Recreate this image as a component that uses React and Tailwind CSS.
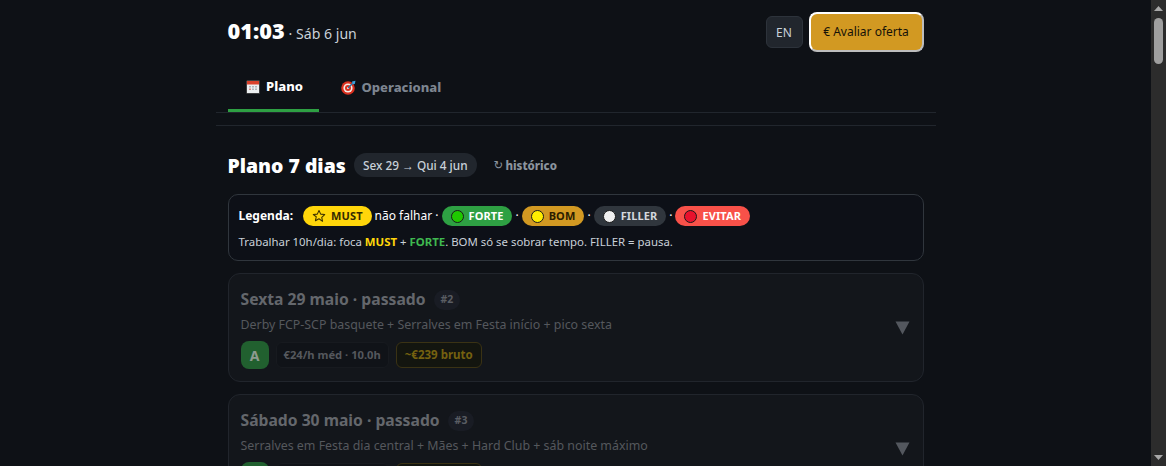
import React from "react";

function Calendar() {
  return (
    <svg width="14" height="14" viewBox="0 0 14 14" className="shrink-0">
      <rect x="0.5" y="0.5" width="13" height="13" fill="#eceff1" stroke="#111" strokeWidth="0.6" />
      <rect x="1" y="1" width="12" height="3.5" fill="#d9412c" />
      <g fill="#b0b6bb">
        <rect x="3" y="6" width="2" height="1.5" /><rect x="6" y="6" width="2" height="1.5" /><rect x="9" y="6" width="2" height="1.5" />
        <rect x="6" y="8.5" width="2" height="1.5" /><rect x="9" y="8.5" width="2" height="1.5" />
      </g>
      <rect x="3" y="8.5" width="2" height="1.5" fill="#d98a80" />
    </svg>
  );
}

function Target() {
  return (
    <svg width="15" height="15" viewBox="0 0 15 15" className="shrink-0">
      <circle cx="7" cy="8" r="6.8" fill="#d9301f" />
      <circle cx="7" cy="8" r="4.6" fill="#f4ece6" />
      <circle cx="7" cy="8" r="3" fill="#d9301f" />
      <circle cx="7" cy="8" r="1.1" fill="#f4ece6" />
      <path d="M7 8 L12 3" stroke="#2a6f9e" strokeWidth="1.2" />
      <path d="M11 1.5 L14.5 0.8 L13.8 4 L11.6 4.2 Z" fill="#3aa0dc" />
    </svg>
  );
}

function Dot({ color }) {
  return <span className="w-[13px] h-[13px] rounded-full border border-[#1a1a1a] shrink-0" style={{ backgroundColor: color }} />;
}

function Star() {
  return (
    <svg width="14" height="14" viewBox="0 0 24 24" className="shrink-0">
      <path d="M12 2.5l2.9 6.3 6.9.8-5.1 4.7 1.4 6.8L12 16.8 5.9 20.1l1.4-6.8L2.2 9.6l6.9-.8z" fill="none" stroke="#3a3000" strokeWidth="1.8" strokeLinejoin="round" />
    </svg>
  );
}

function Badge({ bg, fg, icon, children }) {
  return (
    <span className={`inline-flex items-center gap-[5px] h-5 px-[9px] rounded-full text-[11px] font-bold tracking-[0.1px] ${bg} ${fg}`}>
      {icon}
      {children}
    </span>
  );
}

function Caret() {
  return (
    <svg width="15" height="14" viewBox="0 0 15 14" className="shrink-0 -mt-[2px]">
      <path d="M0.5 0.5H14.5L7.5 13.5Z" fill="#53575e" />
    </svg>
  );
}

function DayCard({ title, rank, desc, hourly, gross }) {
  return (
    <div className="rounded-xl border border-[#21252c] bg-[#13161b] pl-3 pr-[13px] pt-[14px] pb-3 flex items-center justify-between">
      <div className="flex flex-col min-w-0">
        <div className="flex items-center gap-2 h-6">
          <span className="text-[15.7px] font-bold text-[#64676c]">{title}</span>
          <span className="h-5 px-[7px] rounded-full bg-[#191c24] text-[10.5px] font-bold text-[#5a5d63] flex items-center">{rank}</span>
        </div>
        <div className="text-[12.4px] text-[#55585d] mt-[4px] leading-[18px]">{desc}</div>
        <div className="flex items-center gap-[7px] mt-[7px]">
          <span className="w-7 h-7 rounded-lg bg-[#21602f] text-[#8d9a90] text-[14px] font-bold flex items-center justify-center">A</span>
          <span className="h-[26px] px-[7px] rounded-md border border-[#171a1f] bg-[#101318] text-[11.2px] font-bold text-[#55585d] flex items-center">{hourly}</span>
          <span className="h-[26px] px-2 rounded-md border border-[#3a3214] bg-[#13150f] text-[11.5px] font-bold text-[#75610f] flex items-center">{gross}</span>
        </div>
      </div>
      <Caret />
    </div>
  );
}

export default function App() {
  return (
    <div className="h-[466px] w-[1166px] overflow-hidden flex bg-[#0e1116] text-white font-['Noto_Sans','Open_Sans',sans-serif]">
      <div className="flex-1 min-w-0 overflow-hidden">
        <div className="w-[720px] mx-auto">
          <header className="px-3 pt-3 flex items-center justify-between h-[52px]">
            <div className="flex items-baseline gap-[4px] mt-[1px]">
              <span className="text-[21.7px] font-black leading-none text-white">01:03</span>
              <span className="text-[14.1px] text-[#c9d1d9]">· Sáb 6 jun</span>
            </div>
            <div className="flex items-center gap-[6px]">
              <button className="w-[37px] h-8 pt-px rounded-md border border-[#2d333b] bg-[#21262d] text-[12px] text-[#c9d1d9]">EN</button>
              <button className="w-[115px] h-10 rounded-lg border-2 border-t-white border-l-white border-r-[#bdbdbd] border-b-[#bdbdbd] bg-[#d29922] text-[12px] text-[#161208]">€ Avaliar oferta</button>
            </div>
          </header>
          <nav className="h-[61px] border-b border-[#21262d] px-3 flex items-end">
            <div className="w-[91px] h-[50px] pt-[2px] pl-[3px] border-b-[3px] border-[#2ea043] flex items-center justify-center gap-[6px] text-[13px] font-extrabold text-white">
              <Calendar />Plano
            </div>
            <div className="ml-[22px] h-[50px] pt-[1px] flex items-center gap-[6px] text-[13px] font-extrabold text-[#7d8590]">
              <Target />Operacional
            </div>
          </nav>
          <div className="h-[13px] border-b border-[#21262d]" />
          <main className="px-3 pt-[27px] flex flex-col">
            <div className="flex items-center h-6">
              <h1 className="text-[19.4px] font-black text-white pt-[2px]">Plano 7 dias</h1>
              <span className="ml-[8px] h-6 w-[123px] pt-[1px] rounded-full bg-[#21262d] text-[11.8px] font-medium text-[#c9d1d9] flex items-center justify-center gap-[3px]">Sex 29 <span className="font-['Liberation_Sans',sans-serif] text-[12px]">→</span> Qui 4 jun</span>
              <span className="ml-[17px] pt-[2px] text-[11.5px] font-extrabold text-[#8b949e] flex items-center gap-[2px]">
                <span className="font-['DejaVu_Sans',sans-serif] font-normal">↻</span>histórico
              </span>
            </div>
            <section className="mt-[17px] h-[67px] rounded-[10px] border border-[#30363d] bg-[#0d1017] px-[10px] pt-[11px]">
              <div className="flex items-center h-5 text-[12px] text-white whitespace-nowrap">
                <b className="font-bold mr-[10px]">Legenda:</b>
                <Badge bg="bg-[#ffd60a]" fg="text-[#332b00]" icon={<Star />}>MUST</Badge>
                <span className="ml-[3px] mr-[3px]">não falhar ·</span>
                <Badge bg="bg-[#2ea043]" fg="text-white" icon={<Dot color="#1fc800" />}>FORTE</Badge>
                <span className="mx-[3px]">·</span>
                <Badge bg="bg-[#d29922]" fg="text-[#2a1c00]" icon={<Dot color="#ffee00" />}>BOM</Badge>
                <span className="mx-[3px]">·</span>
                <Badge bg="bg-[#30363d]" fg="text-[#d4d8dd]" icon={<Dot color="#f0f0f0" />}>FILLER</Badge>
                <span className="mx-[3px]">·</span>
                <Badge bg="bg-[#f85149]" fg="text-white" icon={<Dot color="#e8112d" />}>EVITAR</Badge>
              </div>
              <p className="mt-[8px] text-[11.4px] leading-[16px] text-[#c9d1d9] whitespace-nowrap">
                Trabalhar 10h/dia: foca <b className="text-[#ffd60a]">MUST</b> + <b className="text-[#3fb950]">FORTE</b>. BOM só se sobrar tempo. FILLER = pausa.
              </p>
            </section>
            <div className="mt-3 flex flex-col gap-3">
              <DayCard title="Sexta 29 maio · passado" rank="#2" desc="Derby FCP-SCP basquete + Serralves em Festa início + pico sexta" hourly="€24/h méd · 10.0h" gross="~€239 bruto" />
              <DayCard title="Sábado 30 maio · passado" rank="#3" desc="Serralves em Festa dia central + Mães + Hard Club + sáb noite máximo" hourly="€31/h méd · 10.0h" gross="~€310 bruto" />
            </div>
          </main>
        </div>
      </div>
      <div className="w-[15px] h-full bg-[#2c2c2c] flex flex-col items-center justify-between shrink-0">
        <div className="flex flex-col items-center w-full">
          <svg width="9" height="5" viewBox="0 0 9 5" className="mt-[6px]"><path d="M4.5 0L9 5H0Z" fill="#a8a8a8" /></svg>
          <div className="w-[9px] h-[46px] mt-[7px] rounded-full bg-[#9f9f9f]" />
        </div>
        <svg width="9" height="5" viewBox="0 0 9 5" className="mb-[6px]"><path d="M0 0H9L4.5 5Z" fill="#a8a8a8" /></svg>
      </div>
    </div>
  );
}
